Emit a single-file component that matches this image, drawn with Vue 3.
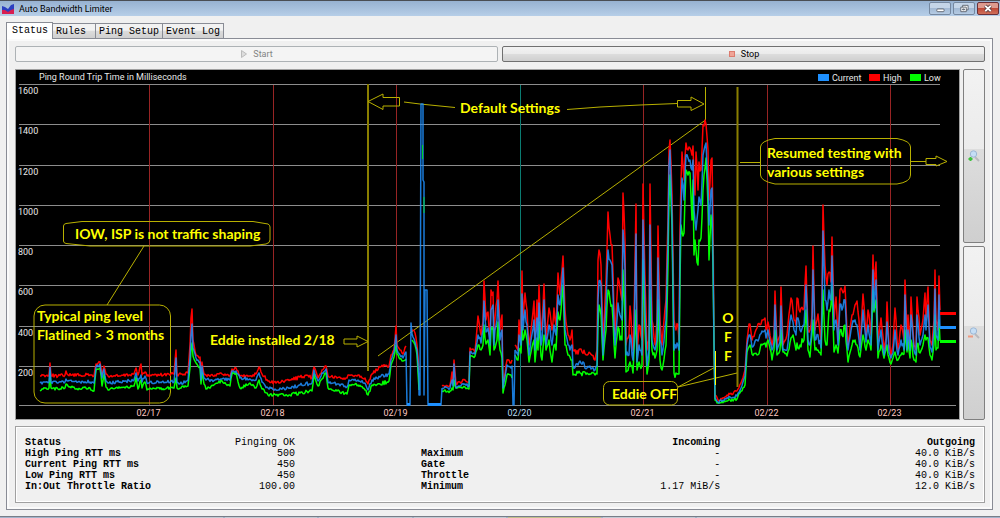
<script setup>
import { ref } from 'vue'

const tabs = ['Status', 'Rules', 'Ping Setup', 'Event Log']
const active = ref('Status')

const yTicks = [
  [1600, 84.5], [1400, 124.5], [1200, 165.5], [1000, 205.5],
  [800, 245.5], [600, 285.5], [400, 326.5], [200, 366.5]
]
const days = [
  ['02/17', 149.5], ['02/18', 273.5], ['02/19', 396.5], ['02/20', 520.5],
  ['02/21', 643.5], ['02/22', 767.5], ['02/23', 890.5]
]
const legend = [
  ['Current', 818, '#1e90ff'], ['High', 869, '#ff0000'], ['Low', 910, '#00ff00']
]

// Each sample: x, high, current, low
const samples = `40 376 383 391|43 375 382 389|49 375 382 388|50 363 367 371|51 375 382 388|58 376 383 389|65 375 382 388|66 371 379 384|68 375 381 386|80 375 382 389|90 375 382 388|94 376 383 391|96 364 367 370|100 362 364 368|102 374 378 386|104 366 369 374|106 374 381 387|108 376 383 390|120 376 382 388|134 374 380 386|136 368 373 377|138 375 381 389|141 364 375 380|142 375 382 388|145 372 376 382|147 376 383 390|150 375 382 388|160 375 382 389|174 374 382 388|176 350 358 378|177 375 382 388|179 374 384 389|188 373 380 386|190 345 358 368|191 318 335 350|192 309 324 343|193 340 348 356|196 355 358 363|198 356 360 366|200 357 362 367|201 373 380 384|202 362 366 372|204 374 378 384|206 375 380 389|215 375 380 384|222 374 379 381|230 376 380 386|232 369 371 374|236 368 371 373|240 376 378 388|250 376 379 383|256 374 380 388|259 367 373 380|262 374 382 389|268 381 388 395|276 383 390 395|290 380 388 395|300 377 385 393|312 377 383 391|314 367 370 374|318 378 381 386|322 370 373 379|326 366 369 373|328 376 382 388|337 378 384 391|347 378 387 394|349 375 380 385|358 375 380 385|365 378 383 390|368 384 390 395|372 374 380 385|380 367 377 384|389 366 374 381|391 355 360 365|394 350 352 357|396 326 335 345|397 345 350 354|400 350 355 359|403 354 358 361|406 346 352 359`
const tail = `412 330 334 340|415 333 342 345|417 345 350 355|419 370 380 390`
const rest = `442 386 388 391|450 385 388 391|452 372 380 388|453 383 386 390|454 360 364 380|456 384 388 388|465 380 384 387|469 382 386 389|470 348 352 356|475 352 354 356|478 316 335 345|481 335 343 350|483 322 330 345|484 281 301 325|486 320 332 344|488 312 328 340|490 340 345 355|491 290 310 330|493 292 305 330|494 338 345 350|495 318 330 348|497 300 320 340|498 281 300 322|500 330 340 350|502 315 330 358|503 385 388 393|507 360 365 375|511 363 368 375|512 360 366 378`
const rest2 = `515 345 350 355|518 350 355 360|519 320 335 350|521 340 345 353|522 271 294 326|523 320 330 340|525 293 310 330|527 310 325 340|529 345 355 362|531 330 340 352|534 301 320 340|535 340 350 362|537 300 318 338|538 330 340 350|539 285 303 322|541 330 345 356|542 325 340 360|544 284 300 335|546 340 345 350|549 308 325 340|552 330 345 362|554 308 325 345|556 325 335 350|558 273 295 312|560 295 305 320|563 256 268 285|565 310 330 345|568 335 345 355|570 340 350 357|572 330 345 360|573 350 366 375|578 354 365 373|580 349 361 373|587 355 368 373|590 353 366 374|595 360 370 375|597 350 366 374|598 260 300 325|599 250 281 305|601 265 285 315|603 345 355 360|606 280 305 330|608 212 250 290|610 235 260 300|612 245 265 305|615 335 345 358|618 278 303 327|620 288 315 340|622 300 320 340|623 193 230 270|625 240 270 320|626 345 355 372|629 335 355 365|630 306 335 362|633 350 360 373|634 320 340 350|636 204 234 310|637 355 362 370|639 325 345 362|642 340 355 365|643 184 220 260|645 280 310 330|647 350 366 374|649 340 350 360|650 184 225 290|652 320 340 350|655 345 350 358|657 320 340 350|658 226 258 300|660 320 340 360|662 345 355 370|666 300 320 345|668 220 240 265|669 150 165 200|670 140 150 175|672 195 215 225|674 320 350 373|676 330 348 373|678 325 346 374|679 340 350 374|680 230 250 280|681 180 210 225|682 152 178 232|684 180 200 233|686 143 155 170|688 150 158 175|690 148 160 173|692 155 170 220|693 146 160 180|694 180 210 255|695 195 220 240|696 152 230 250|698 190 210 265|699 162 197 240|701 170 205 238|703 125 155 190|704 126 150 175|706 124 143 158|708 150 185 205|709 200 225 260|711 160 190 215|712 158 188 225|713 220 260 268|714 340 342 345|715 395 398 400|718 400 402 403|730 394 397 400|737 391 396 399|741 383 388 391|745 370 376 385|747 340 345 352|749 324 335 347|750 324 335 345|752 340 347 354|757 328 340 355|762 320 331 345|765 318 330 343|766 330 338 347|768 322 330 340|771 340 345 352|772 345 350 360|774 335 342 350|775 291 305 330|777 345 350 355|780 335 342 350|781 287 306 330|783 345 350 352|787 335 350 356|791 298 315 338|794 320 330 340|796 325 335 350|797 298 318 343|800 312 330 345|804 308 325 340|806 266 285 310|808 330 340 350|810 330 345 357|812 315 325 335|813 246 270 320|815 330 340 350|818 314 335 350|821 340 348 355|822 300 310 325|823 205 231 290|825 265 300 340|827 285 310 345|829 272 290 310|831 282 300 305|832 237 256 285|834 320 330 352|836 297 320 345|838 340 345 353|840 290 304 330|842 290 310 335|845 286 300 325|847 330 342 350|848 345 350 362|852 315 325 345|855 305 320 340|857 301 325 345|859 320 340 355|860 345 350 357|863 294 310 335|866 335 342 350|868 310 325 340|871 335 345 350|873 255 270 290|874 290 310 312|876 262 280 300|878 340 350 358|881 318 330 345|884 350 355 358|886 338 345 350|887 302 322 345|889 345 352 358|891 355 358 364|893 345 353 358|895 308 330 352|898 350 355 360|901 325 340 355|904 340 350 354|905 280 295 330|907 340 350 352|908 315 330 340|910 345 350 358|911 297 315 340|914 345 350 360|916 350 355 362|917 297 315 345|920 335 345 353|923 320 335 345|925 293 315 335|926 320 330 340|928 287 305 338|930 340 347 355|932 345 352 360|934 320 330 345|935 270 289 315|936 320 335 350|938 330 340 348|939 276 295 320|940 310 328 341`

const parse = text => text.split('|').map(s => s.split(' ').map(Number))

// Repeatable jitter so the trace looks like measured data
let seed = 7
function noise() {
  seed = (seed * 1103515245 + 12345) % 2147483648
  return seed / 1073741824 - 1
}

function trace(rows, column) {
  let d = `M${rows[0][0]} ${rows[0][column]}`
  for (let i = 1; i < rows.length; i++) {
    const a = rows[i - 1]
    const b = rows[i]
    const gap = b[0] - a[0]
    for (let x = a[0] + 1; x < b[0]; x++) {
      const t = (x - a[0]) / gap
      const spread = Math.min(5, Math.max(1.5, (a[3] - a[1]) * 0.12))
      const y = a[column] + (b[column] - a[column]) * t + noise() * spread
      d += `L${x} ${y.toFixed(1)}`
    }
    d += `L${b[0]} ${b[column]}`
  }
  return d
}

const parts = [samples, tail, rest, rest2].map(parse)
const high = parts.map(p => trace(p, 1)).join('')
const low = parts.map(p => trace(p, 3)).join('')
const cur = parts.map(p => trace(p, 2))
const current =
  cur[0] + 'L407 405L410 405L411 323L412 334' +
  cur[1] + 'L419 395L420 395L421 104L423 104L423 180L424 182L424 395L425 290L427 290L428 405L441 405L442 388' +
  cur[2] + 'L513 405L514 405L515 350' + cur[3]

const pingRows = [
  ['Status', 'Pinging OK'], ['High Ping RTT ms', '500'], ['Current Ping RTT ms', '450'],
  ['Low Ping RTT ms', '450'], ['In:Out Throttle Ratio', '100.00']
]
const rateRows = [
  ['Maximum', '-', '40.0 KiB/s'], ['Gate', '-', '40.0 KiB/s'],
  ['Throttle', '-', '40.0 KiB/s'], ['Minimum', '1.17 MiB/s', '12.0 KiB/s']
]
</script>

<template>
  <div class="window">
    <header class="titlebar">
      <svg class="logo" viewBox="0 0 12 10" aria-hidden="true">
        <path d="M0 2 L3 3 L6 5 L9 1 L12 0 V10 H0Z" fill="#2b3fc0" />
        <path d="M0 6 L3 6 L6 8 L9 6 L12 5 V10 H0Z" fill="#d81e50" />
      </svg>
      <h1>Auto Bandwidth Limiter</h1>
      <div class="controls">
        <button type="button" aria-label="Minimize">
          <svg viewBox="0 0 22 12"><rect x="7.5" y="6.5" width="8" height="3" rx="1" fill="#fff" stroke="#59616c" /></svg>
        </button>
        <button type="button" aria-label="Restore">
          <svg viewBox="0 0 22 12">
            <path d="M9.5 2.5h6v5h-6z" fill="#fff" stroke="#59616c" />
            <path d="M7.500 4.500h6v5h-6z" fill="#fff" stroke="#59616c" />
            <path d="M9.500 6.500h2v1h-2z" fill="#8fa6c4" stroke="#59616c" />
          </svg>
        </button>
        <button type="button" class="close" aria-label="Close">
          <svg viewBox="0 0 22 12">
            <path d="M8 3l6 6M14 3l-6 6" stroke="#5f4244" stroke-width="4" />
            <path d="M8 3l6 6M14 3l-6 6" stroke="#fff" stroke-width="2" />
          </svg>
        </button>
      </div>
    </header>

    <nav class="tabs" role="tablist">
      <button
        v-for="t in tabs" :key="t" type="button" role="tab"
        :aria-selected="active === t" :class="{ active: active === t }" @click="active = t"
      >{{ t }}</button>
    </nav>

    <main class="page">
      <div class="actions">
        <button type="button" class="start" disabled>
          <svg viewBox="0 0 8 8"><path d="M1.500 .5L6.500 4L1.500 7.500Z" fill="#ddd" stroke="#bbb" /></svg>
          Start
        </button>
        <button type="button" class="stop">
          <svg viewBox="0 0 8 8"><rect x="1.500" y="1.500" width="5" height="5" fill="#f0a497" stroke="#dc7b6e" /></svg>
          Stop
        </button>
      </div>

      <div class="chart-row">
        <svg class="chart" viewBox="16 70 943 349" role="img" aria-label="Ping Round Trip Time in Milliseconds">
          <rect x="16" y="70" width="943" height="349" fill="#000" />
          <g class="small">
            <text x="39" y="80">Ping Round Trip Time in Milliseconds</text>
            <template v-for="l in legend" :key="l[0]">
              <rect :x="l[1]" y="74" width="11" height="7" :fill="l[2]" />
              <text :x="l[1] + 14" y="81">{{ l[0] }}</text>
            </template>
            <template v-for="t in yTicks" :key="t[0]">
              <line x1="19" x2="940" :y1="t[1]" :y2="t[1]" class="grid" />
              <text x="18" :y="t[1] + 9">{{ t[0] }}</text>
            </template>
            <line x1="19" x2="956" y1="405.5" y2="405.5" class="grid" />
            <template v-for="d in days" :key="d[0]">
              <line :x1="d[1]" :x2="d[1]" y1="85" y2="405" :class="d[0] === '02/20' ? 'teal' : 'day'" />
              <text :x="d[1] - 1" y="416" text-anchor="middle" :class="d[0] === '02/20' ? 'cool' : 'warm'">{{ d[0] }}</text>
            </template>
          </g>

          <g class="marks">
            <path d="M368 84V371M737.500 87V387" class="dim" />
            <path d="M705.500 87V120L378 356" />
            <path d="M368 101.500L383 94V97.500H399.500V106H383V109.500Z" />
            <path d="M404 102L420 104L455 107.500" />
            <path d="M567 109.500L600 107L640 105L677 103.500" />
            <path d="M704 104L691 97V100.500H677.500V107H691V110.500Z" />
            <path d="M344 339H357V336L368 341.500L357 347V344H344Z" />
            <path d="M82 221.500H253L268 224Q270 225 270 227V240Q270 243 266 244L250 246H90L66 243.500Q63.500 243 63.500 241V226Q63.500 224 66 223.500Z" />
            <path d="M144 246L107 305" />
            <rect x="34" y="305" width="136.500" height="98" rx="11" />
            <rect x="603.500" y="381.500" width="74" height="23.500" rx="6" />
            <path d="M678 387L715.500 367M678 387L737 373" />
            <path d="M740 162.500H760.500M910.500 161.500H926V158.500H936V156L947 161.500L936 166V164.500H926V161.500" />
            <path d="M775 138.500H897Q910.500 141 910.500 147V175Q910.500 182 897 184H775Q760.500 181 760.500 175V147Q760.500 141 775 138.500Z" />
          </g>

          <g class="series">
            <path :d="high" stroke="#ff0000" />
            <path :d="low" stroke="#00ff00" />
            <path :d="current" stroke="#1e90ff" class="current" />
            <path d="M422.500 145V159M424 197V213" stroke="#00d030" class="thin" />
            <path d="M428 404.500H441M407 404.500H410" stroke="#1e90ff" class="marker" />
            <path d="M940 313.500H956" stroke="#ff0000" class="marker" />
            <path d="M940 327.500H956" stroke="#1e90ff" class="marker" />
            <path d="M940 341.500H956" stroke="#00ff00" class="marker" />
          </g>
          <path d="M715.500 351V385" stroke="#ffff00" />

          <g class="notes">
            <text x="460" y="113">Default Settings</text>
            <text x="75" y="239">IOW, ISP is not traffic shaping</text>
            <text x="37" y="321">Typical ping level</text>
            <text x="37" y="340">Flatlined &gt; 3 months</text>
            <text x="210" y="345">Eddie installed 2/18</text>
            <text x="612" y="399">Eddie OFF</text>
            <text x="767" y="158">Resumed testing with</text>
            <text x="767" y="177">various settings</text>
            <g text-anchor="middle">
              <text x="728" y="323">O</text>
              <text x="728" y="342">F</text>
              <text x="728" y="361">F</text>
            </g>
          </g>
        </svg>

        <div class="zoom">
          <button type="button" aria-label="Zoom in">
            <svg viewBox="0 0 12 12">
              <path d="M7 7l4 4" stroke="#b9b9bd" stroke-width="2" />
              <circle cx="5.500" cy="4" r="3.200" fill="#c5def5" stroke="#9db7d4" />
              <path d="M2.500 7v4M.5 9h4" stroke="#3fc13f" stroke-width="2" />
            </svg>
          </button>
          <button type="button" aria-label="Zoom out">
            <svg viewBox="0 0 12 12">
              <path d="M7 7l4 4" stroke="#b9b9bd" stroke-width="2" />
              <circle cx="5.500" cy="4" r="3.200" fill="#c5def5" stroke="#9db7d4" />
              <path d="M0 9.500h5" stroke="#ee9a80" stroke-width="2" />
            </svg>
          </button>
        </div>
      </div>

      <section class="stats">
        <table>
          <tbody>
            <tr v-for="r in pingRows" :key="r[0]">
              <th scope="row">{{ r[0] }}</th><td>{{ r[1] }}</td>
            </tr>
          </tbody>
        </table>
        <table class="rates">
          <thead>
            <tr><td></td><th scope="col">Incoming</th><th scope="col">Outgoing</th></tr>
          </thead>
          <tbody>
            <tr v-for="r in rateRows" :key="r[0]">
              <th scope="row">{{ r[0] }}</th><td>{{ r[1] }}</td><td>{{ r[2] }}</td>
            </tr>
          </tbody>
        </table>
      </section>
    </main>
    <footer class="taskbar"><i></i><i></i><i></i><i></i><i class="lit"></i><i></i><i></i></footer>
  </div>
</template>

<style>
body { background: #f0f0f0; }
</style>

<style scoped>
.window {
  box-sizing: border-box;
  min-height: 100vh;
  display: flex;
  flex-direction: column;
  background: #f0f0f0;
  color: #000;
  font-family: Roboto, "Open Sans", sans-serif;
  font-size: 9px;
}
button { font: inherit; color: inherit; padding: 0; margin: 0; box-sizing: border-box; }
.titlebar {
  display: flex;
  align-items: center;
  height: 16px;
  box-sizing: border-box;
  border-top: 1px solid #4a4e54;
  padding: 0 1px 0 2px;
  background: linear-gradient(#97b2d1, #b6cee8);
}
.logo { width: 12px; height: 10px; }
h1 { font-size: 9px; font-weight: 400; margin: 0 auto 0 5px; line-height: 12px; }
.controls { display: flex; gap: 2px; }
.controls button {
  width: 22px;
  height: 13px;
  border: 1px solid #7588a0;
  border-radius: 2px;
  background: linear-gradient(#c4d5e8 45%, #a3bad5 50%, #b5cbe3);
}
.controls svg { display: block; width: 100%; height: 100%; }
.controls .close { border-color: #6a3038; background: linear-gradient(#dd9a8e 45%, #c04a38 50%, #d0705a); }

.tabs {
  display: flex;
  align-items: flex-end;
  height: 22px;
  padding-left: 6px;
  font-family: "Liberation Mono", monospace;
  font-size: 10px;
}
.tabs button {
  height: 15px;
  padding: 0 3px;
  border: 1px solid #898c95;
  border-left-width: 0;
  border-bottom: 0;
  background: linear-gradient(#f2f2f2 45%, #dcdcdc 50%, #d0d0d0);
  text-align: left;
}
.tabs button:nth-child(2) { padding-right: 9px; }
.tabs button.active {
  height: 17px;
  padding: 0 4px 2px 5px;
  border-left-width: 1px;
  background: #fff;
  position: relative;
  margin-bottom: -1px;
}
.page {
  flex: 1;
  display: flex;
  flex-direction: column;
  margin: 0 7px 6px 6px;
  padding: 7px 7px 6px 8px;
  border: 1px solid #898c95;
  box-shadow: inset 0 0 0 2px #fafafa;
}
.actions { display: grid; grid-template-columns: 1fr 1fr; gap: 4px; }
.actions button {
  display: flex;
  align-items: center;
  justify-content: center;
  gap: 5px;
  height: 16px;
  border: 1px solid #707070;
  border-radius: 2px;
  background: linear-gradient(#f2f2f2, #ebebeb 48%, #dddddd 50%, #cfcfcf);
}
.actions .start { border-color: #adb2b5; background: #f4f4f4; color: #838383; }
.actions svg { width: 8px; height: 8px; }
.chart-row { display: flex; gap: 3px; margin-top: 7px; }
.chart {
  flex: 1;
  min-width: 0;
  display: block;
  border: 1px solid #a0a0a0;
}
.zoom { width: 22px; display: flex; flex-direction: column; gap: 3px; }
.zoom button {
  flex: 1;
  border: 1px solid #808080;
  border-radius: 2px;
  background: linear-gradient(#f2f2f2, #ebebeb 46%, #dddddd 46%, #cfcfcf);
}
.zoom svg { width: 12px; height: 12px; display: block; margin: auto; }

.small text { font-size: 9px; fill: #e8e8e8; }
.small .warm { fill: #ffc8c0; }
.small .cool { fill: #b8dcf0; }
.grid { stroke: #8c8c8c; }
.day { stroke: #982424; }
.teal { stroke: #0b7c72; }
.marks { fill: none; stroke: #b8b000; stroke-width: 1; }
.marks .dim { stroke: #8a7e00; stroke-width: 2; }
.series { fill: none; stroke-width: 1.5; }
.series path { stroke-linejoin: round; }
.series .thin { stroke-width: 1; }
.series .marker { stroke-width: 3; }
.current { opacity: 0.85; }
.notes text { font-family: Lato, "Open Sans", sans-serif; font-size: 14px; font-weight: 700; fill: #ffff00; }

.stats {
  flex: 1;
  display: grid;
  grid-template-columns: 270fr 554fr;
  gap: 126px;
  align-items: start;
  margin-top: 6px;
  padding: 10px 9px;
  border: 1px solid #a0a0a0;
  box-shadow: inset 0 0 0 1px #fff;
  font-family: "Liberation Mono", monospace;
  font-size: 10px;
  line-height: 11px;
}
table { width: 100%; border-collapse: collapse; table-layout: fixed; }
th, td { padding: 0; height: 11px; text-align: right; font-weight: 400; }
th { font-weight: 700; }
th[scope="row"] { text-align: left; white-space: nowrap; }
.rates tr > :nth-child(1) { width: 24%; }
.rates tr > :nth-child(2) { width: 30%; }
.taskbar {
  display: flex;
  gap: 2px;
  height: 1px;
  padding: 0 21% 0 13%;
  border-top: 1px solid #777e88;
  background: #a3b3ca;
}
.taskbar i { flex: 1; background: #c3cad3; }
.taskbar .lit { background: #c3c08a; }
</style>
